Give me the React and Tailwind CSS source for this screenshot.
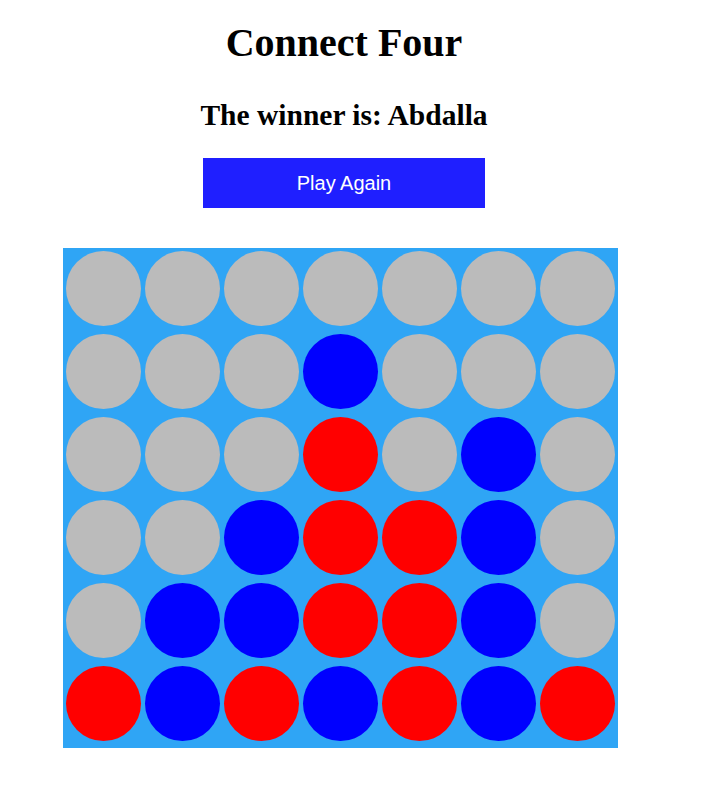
const board = [
  'GGGGGGG',
  'GGGBGGG',
  'GGGRGBG',
  'GGBRRBG',
  'GBBRRBG',
  'RBRBRBR',
];

const colors = {
  G: 'bg-[#bbbbbb]',
  B: 'bg-[#0000ff]',
  R: 'bg-[#ff0000]',
};

export default function App() {
  return (
    <div className="w-[688px] bg-white min-h-[789px]">
      <h1 className="pt-[23px] text-center text-[40px] leading-[40px] font-bold text-black font-['Liberation_Serif',serif]">
        Connect Four
      </h1>
      <h2 className="mt-[38px] text-center text-[29.5px] leading-[29px] font-bold text-black font-['Liberation_Serif',serif]">
        The winner is: Abdalla
      </h2>
      <div className="mt-[28px] flex justify-center">
        <button className="w-[282px] h-[50px] bg-[#1f1fff] text-white text-[20px] font-['Liberation_Sans',Arial,sans-serif]">
          Play Again
        </button>
      </div>
      {/* Board */}
      <div className="mt-[40px] ml-[63px] w-[555px] bg-[#2fa5f5] pt-[3px] px-[3px] pb-[7px] grid grid-cols-[repeat(7,75px)] gap-x-[4px] gap-y-[8px]">
        {board.map((row, r) =>
          row.split('').map((c, i) => (
            <div key={`${r}-${i}`} className={`w-[75px] h-[75px] rounded-full ${colors[c]}`} />
          ))
        )}
      </div>
    </div>
  );
}
